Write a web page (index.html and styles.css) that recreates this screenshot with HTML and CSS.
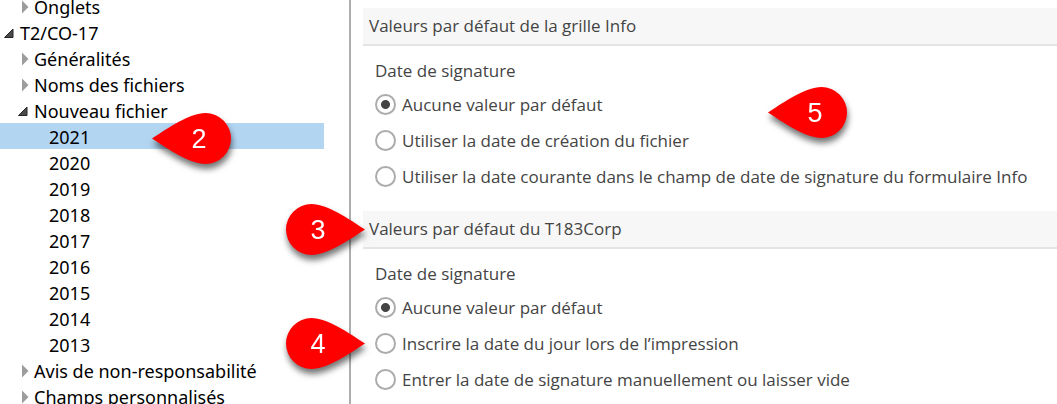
FILE: index.html
```html
<!DOCTYPE html>
<html lang="fr">
<head>
    <meta charset="UTF-8">
    <meta name="viewport" content="width=device-width, initial-scale=1.0">
    <title>Valeurs par défaut</title>
    <link rel="stylesheet" href="styles.css">
</head>
<body>
    <!-- Shared shapes -->
    <svg class="defs" width="0" height="0" aria-hidden="true">
        <symbol id="closed" viewBox="0 0 14 14"><path d="M6 0.5 L12.5 7 L6 13.5 Z" fill="#9c9c9c"/></symbol>
        <symbol id="opened" viewBox="0 0 14 14"><path d="M11 3 V11.5 H2.5 Z" fill="#4a4a4a" stroke="#262626"/></symbol>
        <symbol id="pin-left" viewBox="0 0 79 51"><path d="M0 25.5 C16 15 38 0 53.5 0 A25.5 25.5 0 0 1 53.5 51 C38 51 16 36 0 25.5 Z" fill="#f00"/></symbol>
        <symbol id="pin-right" viewBox="0 0 79 51"><path d="M79 25.5 C63 15 41 0 25.5 0 A25.5 25.5 0 0 0 25.5 51 C41 51 63 36 79 25.5 Z" fill="#f00"/></symbol>
    </svg>

    <div class="window">
        <nav class="sidebar">
            <ul class="tree">
                <li class="node level-2"><svg class="arrow"><use href="#closed"/></svg>Onglets</li>
                <li class="node level-1"><svg class="arrow"><use href="#opened"/></svg>T2/CO-17</li>
                <li class="node level-2"><svg class="arrow"><use href="#closed"/></svg>Généralités</li>
                <li class="node level-2"><svg class="arrow"><use href="#closed"/></svg>Noms des fichiers</li>
                <li class="node level-2"><svg class="arrow"><use href="#opened"/></svg>Nouveau fichier</li>
                <li class="node leaf selected">2021
                    <span class="pin pin-2"><svg><use href="#pin-left"/></svg><b>2</b></span>
                </li>
                <li class="node leaf">2020</li>
                <li class="node leaf">2019</li>
                <li class="node leaf">2018</li>
                <li class="node leaf">2017</li>
                <li class="node leaf">2016</li>
                <li class="node leaf">2015</li>
                <li class="node leaf">2014</li>
                <li class="node leaf">2013</li>
                <li class="node level-2"><svg class="arrow"><use href="#closed"/></svg>Avis de non-responsabilité</li>
                <li class="node level-2"><svg class="arrow"><use href="#closed"/></svg>Champs personnalisés</li>
            </ul>
        </nav>

        <main class="content">
            <section class="section">
                <h2 class="section-title">Valeurs par défaut de la grille Info</h2>
                <fieldset class="options">
                    <legend>Date de signature</legend>
                    <div class="option">
                        <input type="radio" name="info" id="info-none" checked>
                        <label for="info-none">Aucune valeur par défaut</label>
                        <span class="pin pin-5"><svg><use href="#pin-left"/></svg><b>5</b></span>
                    </div>
                    <div class="option">
                        <input type="radio" name="info" id="info-created">
                        <label for="info-created">Utiliser la date de création du fichier</label>
                    </div>
                    <div class="option">
                        <input type="radio" name="info" id="info-current">
                        <label for="info-current">Utiliser la date courante dans le champ de date de signature du formulaire Info</label>
                    </div>
                </fieldset>
            </section>

            <section class="section">
                <h2 class="section-title">Valeurs par défaut du T183Corp
                    <span class="pin pin-3"><svg><use href="#pin-right"/></svg><b>3</b></span>
                </h2>
                <fieldset class="options">
                    <legend>Date de signature</legend>
                    <div class="option">
                        <input type="radio" name="corp" id="corp-none" checked>
                        <label for="corp-none">Aucune valeur par défaut</label>
                    </div>
                    <div class="option">
                        <input type="radio" name="corp" id="corp-print">
                        <label for="corp-print">Inscrire la date du jour lors de l’impression</label>
                        <span class="pin pin-4"><svg><use href="#pin-right"/></svg><b>4</b></span>
                    </div>
                    <div class="option">
                        <input type="radio" name="corp" id="corp-manual">
                        <label for="corp-manual">Entrer la date de signature manuellement ou laisser vide</label>
                    </div>
                </fieldset>
            </section>
        </main>
    </div>
</body>
</html>
```

FILE: styles.css
```css
* { box-sizing: border-box; }
body { margin: 0; background-color: #fff; font-family: "Open Sans", "Noto Sans", sans-serif; overflow: hidden; }
.defs { position: absolute; }
.window { display: flex; height: 100vh; }

/* Tree */
.sidebar { flex: 0 0 351px; border-right: 2px solid #adadad; padding-right: 25px; }
.tree { list-style: none; margin: -7px 0 0; padding: 0; }
.node { display: flex; align-items: center; gap: 4px; height: 26px; padding-top: 1px; font-family: "Noto Sans", "Open Sans", sans-serif; font-size: 18px; color: #000; white-space: nowrap; }
.level-1 { padding-left: 2px; }
.level-2 { padding-left: 16px; }
.leaf { padding-left: 49px; }
.selected { position: relative; background-color: #b2d5f2; }
.arrow { width: 14px; height: 14px; }

/* Settings */
.content { flex: 1; display: flex; flex-direction: column; gap: 17px; padding: 8px 0 0 12px; min-width: 0; }
.section-title { position: relative; margin: 0; padding: 0 6px; height: 38px; line-height: 36px; font-size: 17px; font-weight: normal; color: #444; background-color: #f7f7f7; border-bottom: 2px solid #e4e4e4; }
.options { margin: 0; padding: 12px 0 0 12px; border: none; font-size: 17px; color: #444; }
.options legend { float: left; width: 100%; padding: 0; margin-bottom: 2px; line-height: 26px; }
.option { clear: both; position: relative; display: flex; align-items: center; gap: 6px; height: 36px; white-space: nowrap; }
.option input { appearance: none; flex: none; width: 21px; height: 21px; margin: 0; border: 2px solid #acacac; border-radius: 50%; background-color: #fff; }
.option input:checked { background-image: radial-gradient(circle, #444 4px, transparent 5px); }

/* Numbered callouts */
.pin { position: absolute; top: 50%; width: 79px; height: 51px; margin-top: -25px; filter: drop-shadow(1px 5px 3px rgba(0, 0, 0, 0.55)); }
.pin svg { display: block; width: 79px; height: 51px; }
.pin b { position: absolute; top: 0; left: 22px; width: 50px; text-align: center; font: 27px/52px "Liberation Sans", sans-serif; color: #fff; }
.pin-2 { left: 152px; margin-top: -23px; }
.pin-3 { left: -77px; }
.pin-4 { left: -89px; }
.pin-5 { left: 393px; margin-top: -17px; }
.pin-3 b, .pin-4 b { left: 7px; }
```
